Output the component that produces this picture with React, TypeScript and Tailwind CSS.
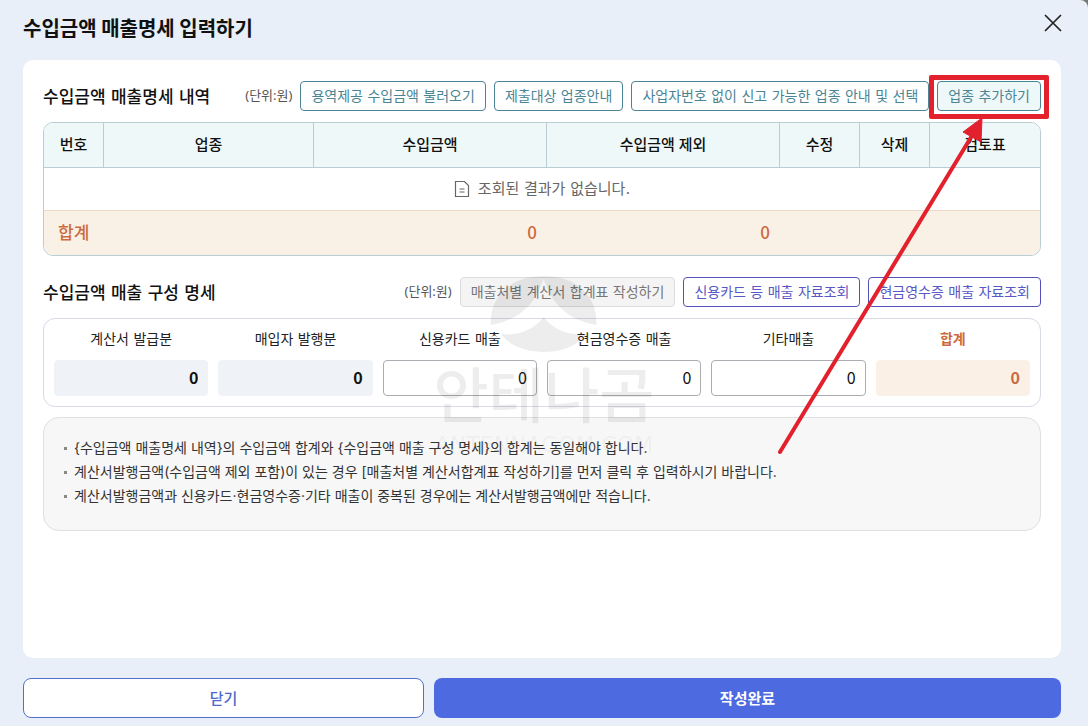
import { useState } from "react";
import type { ReactNode } from "react";

const columns = [
  { label: "번호", width: "w-[60px]" },
  { label: "업종", width: "w-[210px]" },
  { label: "수입금액", width: "w-[233px]" },
  { label: "수입금액 제외", width: "w-[233px]" },
  { label: "수정", width: "w-[80px]" },
  { label: "삭제", width: "w-[70px]" },
  { label: "검토표", width: "w-auto" },
];

const fields = [
  { id: "issued", label: "계산서 발급분", kind: "fixed" },
  { id: "buyer", label: "매입자 발행분", kind: "fixed" },
  { id: "card", label: "신용카드 매출", kind: "edit" },
  { id: "cash", label: "현금영수증 매출", kind: "edit" },
  { id: "etc", label: "기타매출", kind: "edit" },
  { id: "sum", label: "합계", kind: "total" },
];

const labelStyles: Record<string, string> = {
  fixed: "text-[#222]",
  edit: "text-[#222]",
  total: "font-bold text-[#cb6a3e]",
};

const inputStyles: Record<string, string> = {
  fixed: "border-[#eff2f7] bg-[#eff2f7] font-bold text-[#111]",
  edit: "border-[#aaadb2] bg-white text-[#111]",
  total: "border-[#faf0e6] bg-[#faf0e6] font-bold text-[#cb6a3e]",
};

const notes = [
  "{수입금액 매출명세 내역}의 수입금액 합계와 {수입금액 매출 구성 명세}의 합계는 동일해야 합니다.",
  "계산서발행금액(수입금액 제외 포함)이 있는 경우 [매출처별 계산서합계표 작성하기]를 먼저 클릭 후 입력하시기 바랍니다.",
  "계산서발행금액과 신용카드·현금영수증·기타 매출이 중복된 경우에는 계산서발행금액에만 적습니다.",
];

const tones = {
  teal: "border-[#4b8494] bg-white text-[#4b8494]",
  tealFilled: "border-[#4b8494] bg-[#eef8f8] text-[#4b8494]",
  indigo: "border-[#5450b8] bg-white text-[#5958c4]",
  disabled: "border-[#dcdcdc] bg-[#f4f4f4] text-[#777]",
};

function SmallButton({ tone, children }: { tone: keyof typeof tones; children: ReactNode }) {
  return (
    <button
      type="button"
      disabled={tone === "disabled"}
      className={`h-[30px] rounded-[4px] border px-[10px] font-['DejaVu_Sans','Noto_Sans_CJK_KR',sans-serif] text-[14px] leading-[28px] whitespace-nowrap ${tones[tone]}`}
    >
      {children}
    </button>
  );
}

function SectionTitle({ children }: { children: ReactNode }) {
  return (
    <h2 className="pt-[2px] font-['DejaVu_Sans','Noto_Sans_CJK_KR',sans-serif] text-[17px] leading-[28px] font-medium whitespace-nowrap">
      {children}
    </h2>
  );
}

function Watermark() {
  return (
    <div
      aria-hidden="true"
      className="pointer-events-none absolute top-[216px] left-1/2 flex -translate-x-1/2 flex-col items-center pl-1 text-black/7"
    >
      <svg width="106" height="76" viewBox="0 0 106 76" fill="currentColor">
        <path d="M0 49C-1 19 21 0 53 0C85 0 107 19 106 49C80 45 63 30 55 8L53 3L51 8C43 30 26 45 0 49Z" />
        <path d="M53 41C64 55 80 60 96 58C85 71 70 76 53 76C36 76 21 71 10 58C26 60 42 55 53 41Z" />
      </svg>
      <span className="mt-[13px] text-[60px] leading-[60px] font-medium whitespace-nowrap">안테나곰</span>
      <span className="mt-2 font-['DejaVu_Sans'] text-[22px] leading-[24px] text-black/5">ANTENNAGOM.COM</span>
    </div>
  );
}

export default function App() {
  const [values, setValues] = useState<Record<string, string>>({
    issued: "0",
    buyer: "0",
    card: "0",
    cash: "0",
    etc: "0",
    sum: "0",
  });

  return (
    <div className="min-h-screen bg-[#777] font-['Noto_Sans','Noto_Sans_CJK_KR',sans-serif] text-[#111]">
      <div className="flex min-h-screen flex-col rounded-tr-lg bg-[#e8eff8] px-[23px] pb-2 sm:pr-[27px]">
        <header className="flex h-[60px] items-start justify-between">
          <h1 className="pt-[13px] font-['Noto_Sans_CJK_KR',sans-serif] text-[20px] leading-[30px] font-bold">
            수입금액 매출명세 입력하기
          </h1>
          <button type="button" aria-label="닫기 창" className="mt-[13px] -mr-[2px] p-[1px]">
            <svg width="18" height="18" viewBox="0 0 18 18" fill="none" stroke="#222" strokeWidth="1.7">
              <path d="M1 1L17 17M17 1L1 17" />
            </svg>
          </button>
        </header>

        <main className="relative flex-1 rounded-[10px] bg-white px-5 pt-[21px]">
          <section>
            <div className="flex items-center justify-between">
              <SectionTitle>수입금액 매출명세 내역</SectionTitle>
              <div className="flex items-center gap-2">
                <span className="text-[13px] text-[#555] whitespace-nowrap">(단위:원)</span>
                <SmallButton tone="teal">용역제공 수입금액 불러오기</SmallButton>
                <SmallButton tone="teal">제출대상 업종안내</SmallButton>
                <SmallButton tone="teal">사업자번호 없이 신고 가능한 업종 안내 및 선택</SmallButton>
                <div className="relative z-10 flex">
                  <SmallButton tone="tealFilled">업종 추가하기</SmallButton>
                  <div className="pointer-events-none absolute -inset-x-2 -top-[6px] -bottom-[8px] rounded-[2px] border-5 border-[#e3212d]" />
                  <svg
                    aria-hidden="true"
                    className="pointer-events-none absolute top-[35px] right-[56px]"
                    width="210"
                    height="340"
                    viewBox="0 0 210 340"
                  >
                    <path d="M5 336L198 18" stroke="#e3212d" strokeWidth="4" strokeLinecap="round" />
                    <path d="M207 2L206 26L188 16Z" fill="#e3212d" stroke="#e3212d" strokeLinejoin="round" />
                  </svg>
                </div>
              </div>
            </div>

            <div className="mt-[11px] overflow-hidden rounded-[10px] border border-[#b9cdd3]">
              <table className="w-full table-fixed border-separate border-spacing-0 text-[15px]">
                <thead>
                  <tr className="h-[45px] bg-[#eff8f8]">
                    {columns.map((c) => (
                      <th
                        key={c.label}
                        scope="col"
                        className={`${c.width} border-r border-b border-[#b9cdd3] px-0 pt-0 pb-[2px] font-medium last:border-r-0`}
                      >
                        {c.label}
                      </th>
                    ))}
                  </tr>
                </thead>
                <tbody>
                  <tr className="h-[42px]">
                    <td colSpan={7} className="p-0 text-[#666]">
                      <div className="flex items-center justify-center gap-2 font-['DejaVu_Sans','Noto_Sans_CJK_KR',sans-serif]">
                        <svg width="16" height="18" viewBox="0 0 16 18" fill="none" stroke="#666" strokeWidth="1.2">
                          <path d="M1.5 1.5H10.5L14.5 5.5V16.5H1.5ZM5.5 9H10.5M5.5 12H10.5" />
                        </svg>
                        조회된 결과가 없습니다.
                      </div>
                    </td>
                  </tr>
                </tbody>
                <tfoot>
                  <tr className="h-[45px] bg-[#faf1e6] font-['Noto_Sans_CJK_KR',sans-serif] text-[17px] leading-[24px] text-[#cb6a3e]">
                    <th scope="row" colSpan={2} className="border-t border-[#f0d8cb] pt-0 pr-0 pb-[2px] pl-[14px] text-left font-medium">
                      합계
                    </th>
                    <td className="border-t border-[#f0d8cb] pt-0 pr-[10px] pb-[2px] pl-0 text-right font-medium">0</td>
                    <td className="border-t border-[#f0d8cb] pt-0 pr-[10px] pb-[2px] pl-0 text-right font-medium">0</td>
                    <td colSpan={3} className="border-t border-[#f0d8cb] p-0" />
                  </tr>
                </tfoot>
              </table>
            </div>
          </section>

          <section className="mt-[21px]">
            <div className="flex items-center justify-between">
              <SectionTitle>수입금액 매출 구성 명세</SectionTitle>
              <div className="flex items-center gap-2">
                <span className="text-[13px] text-[#555] whitespace-nowrap">(단위:원)</span>
                <SmallButton tone="disabled">매출처별 계산서 합계표 작성하기</SmallButton>
                <SmallButton tone="indigo">신용카드 등 매출 자료조회</SmallButton>
                <SmallButton tone="indigo">현금영수증 매출 자료조회</SmallButton>
              </div>
            </div>

            <div className="mt-[11px] flex gap-[10px] rounded-[12px] border border-[#d6dae9] p-[10px]">
              {fields.map((f) => (
                <div key={f.id} className="min-w-0 flex-1">
                  <label
                    htmlFor={f.id}
                    className={`block text-center font-['DejaVu_Sans','Noto_Sans_CJK_KR',sans-serif] text-[14px] leading-[21px] whitespace-nowrap ${labelStyles[f.kind]}`}
                  >
                    {f.label}
                  </label>
                  <input
                    id={f.id}
                    type="text"
                    inputMode="numeric"
                    readOnly={f.kind !== "edit"}
                    value={values[f.id]}
                    onChange={(e) => setValues({ ...values, [f.id]: e.target.value })}
                    className={`mt-[10px] block h-9 w-full rounded-[4px] border px-[9px] pb-[2px] text-right font-['Noto_Sans_CJK_KR',sans-serif] text-[16px] ${inputStyles[f.kind]}`}
                  />
                </div>
              ))}
            </div>
          </section>

          <ul className="mt-[10px] rounded-[16px] border border-[#e0e0e0] bg-[#f7f7f7] px-5 pt-[18px] pb-[22px] font-['Inter','Noto_Sans_CJK_KR',sans-serif] text-[14px] leading-[24px] text-[#333]">
            {notes.map((n) => (
              <li key={n} className="flex items-center gap-[7px]">
                <span className="size-[3px] shrink-0 bg-[#888]" />
                {n}
              </li>
            ))}
          </ul>
          <Watermark />
        </main>

        <footer className="mt-5 grid grid-cols-[39fr_61fr] gap-[10px]">
          <button type="button" className="h-10 rounded-lg border border-[#5470cc] bg-white text-[15px] font-medium text-[#4b68cc]">
            닫기
          </button>
          <button type="button" className="h-10 rounded-lg bg-[#4e6ae0] text-[15px] font-bold text-white">
            작성완료
          </button>
        </footer>
      </div>
    </div>
  );
}
